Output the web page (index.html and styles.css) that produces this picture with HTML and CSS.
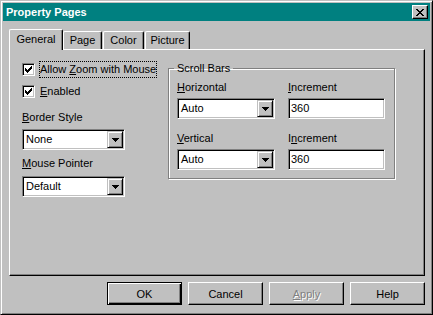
FILE: index.html
```html
<!DOCTYPE html>
<html>
<head>
    <link rel="stylesheet" href="styles.css">
</head>
<body>
    <div class="window">
        <div class="titlebar">
            <span class="title">Property Pages</span>
            <button class="close">
                <svg width="8" height="7" viewBox="0 0 8 7" shape-rendering="crispEdges"><path d="M0 0h2v1h1v1h2v-1h1v-1h2v1h-1v1h-1v1h-1v1h1v1h1v1h1v1h-2v-1h-1v-1h-2v1h-1v1h-2v-1h1v-1h1v-1h1v-1h-1v-1h-1v-1h-1z"/></svg>
            </button>
        </div>

        <div class="tabs">
            <div class="tab active tab-general">General</div>
            <div class="tab tab-page">Page</div>
            <div class="tab tab-color">Color</div>
            <div class="tab tab-picture">Picture</div>
        </div>

        <div class="panel">
            <div class="left">
                <div class="check">
                    <span class="box"><svg width="7" height="7" viewBox="0 0 7 7" shape-rendering="crispEdges"><path d="M6 0h1v3h-1zM5 1h1v3h-1zM4 2h1v3h-1zM3 3h1v3h-1zM2 4h1v3h-1zM1 3h1v3h-1zM0 2h1v3h-1z"/></svg></span>
                    <span class="check-text focus">Allow <u>Z</u>oom with Mouse</span>
                </div>
                <div class="check second">
                    <span class="box"><svg width="7" height="7" viewBox="0 0 7 7" shape-rendering="crispEdges"><path d="M6 0h1v3h-1zM5 1h1v3h-1zM4 2h1v3h-1zM3 3h1v3h-1zM2 4h1v3h-1zM1 3h1v3h-1zM0 2h1v3h-1z"/></svg></span>
                    <span class="check-text"><u>E</u>nabled</span>
                </div>

                <div class="label border-label"><u>B</u>order Style</div>
                <div class="select wide">
                    <span class="value">None</span>
                    <span class="arrow"><svg width="7" height="4" viewBox="0 0 7 4" shape-rendering="crispEdges"><path d="M0 0h7v1h-1v1h-1v1h-1v1h-1v-1h-1v-1h-1v-1h-1z"/></svg></span>
                </div>

                <div class="label pointer-label"><u>M</u>ouse Pointer</div>
                <div class="select wide">
                    <span class="value">Default</span>
                    <span class="arrow"><svg width="7" height="4" viewBox="0 0 7 4" shape-rendering="crispEdges"><path d="M0 0h7v1h-1v1h-1v1h-1v1h-1v-1h-1v-1h-1v-1h-1z"/></svg></span>
                </div>
            </div>

            <fieldset class="group">
                <legend>Scroll Bars</legend>
                <div class="group-grid">
                    <div class="label"><u>H</u>orizontal</div>
                    <div class="label"><u>I</u>ncrement</div>
                    <div class="select">
                        <span class="value">Auto</span>
                        <span class="arrow"><svg width="7" height="4" viewBox="0 0 7 4" shape-rendering="crispEdges"><path d="M0 0h7v1h-1v1h-1v1h-1v1h-1v-1h-1v-1h-1v-1h-1z"/></svg></span>
                    </div>
                    <div class="field">360</div>

                    <div class="label row-gap"><u>V</u>ertical</div>
                    <div class="label row-gap">I<u>n</u>crement</div>
                    <div class="select">
                        <span class="value">Auto</span>
                        <span class="arrow"><svg width="7" height="4" viewBox="0 0 7 4" shape-rendering="crispEdges"><path d="M0 0h7v1h-1v1h-1v1h-1v1h-1v-1h-1v-1h-1v-1h-1z"/></svg></span>
                    </div>
                    <div class="field">360</div>
                </div>
            </fieldset>
        </div>

        <div class="buttons">
            <button class="btn default">OK</button>
            <button class="btn">Cancel</button>
            <button class="btn disabled"><u>A</u>pply</button>
            <button class="btn">Help</button>
        </div>
    </div>
</body>
</html>
```

FILE: styles.css
```css
* {
    box-sizing: border-box;
}
body {
    margin: 0;
    font-family: "Liberation Sans", Arial, sans-serif;
    font-size: 11px;
    color: #000;
    background: #c0c0c0;
}
u {
    text-underline-offset: 1px;
}
.window {
    width: 433px;
    height: 315px;
    padding: 2px;
    background: #c0c0c0;
    border: 1px solid;
    border-color: #c0c0c0 #000 #000 #c0c0c0;
    box-shadow: inset 1px 1px #fff, inset -1px -1px #808080;
}
.titlebar {
    height: 18px;
    display: flex;
    align-items: center;
    justify-content: space-between;
    padding: 0 2px 0 3px;
    background: #008080;
    color: #fff;
}
.title {
    font-weight: bold;
    line-height: 18px;
}
.close {
    width: 16px;
    height: 14px;
    padding: 0;
    display: flex;
    align-items: center;
    justify-content: center;
    background: #c0c0c0;
    border: 1px solid;
    border-color: #fff #000 #000 #fff;
    box-shadow: inset -1px -1px #808080;
}

/* tabs */
.tabs {
    height: 20px;
    display: flex;
    align-items: flex-end;
    margin: 8px 0 0 6px;
    position: relative;
    z-index: 1;
}
.tab {
    height: 18px;
    margin-right: 1px;
    line-height: 16px;
    text-align: center;
    white-space: nowrap;
    border: 1px solid;
    border-bottom: none;
    border-color: #fff #000 #000 #fff;
    border-radius: 2px 2px 0 0;
    box-shadow: inset -1px 0 #808080;
}
.tab.active {
    height: 21px;
    margin-bottom: -1px;
    margin-right: 0;
    line-height: 18px;
    background: #c0c0c0;
}
.tab-general {
    width: 54px;
}
.tab-page {
    width: 39px;
}
.tab-color {
    width: 41px;
}
.tab-picture {
    width: 45px;
}

/* panel */
.panel {
    height: 227px;
    margin: 0 5px 0 6px;
    padding: 11px 0 0 12px;
    display: flex;
    align-items: flex-start;
    border: 1px solid;
    border-color: #fff #000 #000 #fff;
    box-shadow: inset -1px -1px #808080;
}
.left {
    width: 146px;
    flex-shrink: 0;
}
.check {
    height: 17px;
    display: flex;
    align-items: center;
}
.check.second {
    margin-top: 5px;
}
.box {
    width: 13px;
    height: 13px;
    margin-right: 4px;
    display: flex;
    align-items: center;
    justify-content: center;
    background: #fff;
    border: 1px solid;
    border-color: #808080 #fff #fff #808080;
    box-shadow: inset 1px 1px #000, inset -1px -1px #c0c0c0;
}
.check-text {
    height: 17px;
    padding: 0 1px;
    line-height: 17px;
    white-space: nowrap;
}
.check-text.focus {
    outline: 1px dotted #000;
    outline-offset: -1px;
}
.label {
    height: 13px;
    line-height: 13px;
    white-space: nowrap;
}
.border-label {
    margin-top: 11px;
    margin-bottom: 5px;
}
.pointer-label {
    margin-top: 7px;
    margin-bottom: 6px;
}
.select,
.field {
    height: 21px;
    padding: 1px;
    display: flex;
    background: #fff;
    border: 1px solid;
    border-color: #808080 #fff #fff #808080;
    box-shadow: inset 1px 1px #000, inset -1px -1px #c0c0c0;
}
.select.wide {
    width: 103px;
}
.value {
    flex: 1;
    padding-left: 2px;
    line-height: 17px;
}
.field {
    padding-left: 2px;
    line-height: 17px;
}
.arrow {
    width: 16px;
    height: 17px;
    display: flex;
    align-items: center;
    justify-content: center;
    background: #c0c0c0;
    border: 1px solid;
    border-color: #c0c0c0 #000 #000 #c0c0c0;
    box-shadow: inset 1px 1px #fff, inset -1px -1px #808080;
}

/* scroll bars group */
.group {
    width: 227px;
    height: 117px;
    min-width: 0;
    margin: 1px 0 0 0;
    padding: 6px 0 0 8px;
    border: 1px solid #808080;
    box-shadow: inset 1px 1px #fff, 1px 1px #fff;
}
.group legend {
    padding: 0 3px;
    margin-left: -3px;
    line-height: 13px;
}
.group-grid {
    display: grid;
    grid-template-columns: 98px 97px;
    column-gap: 13px;
    row-gap: 4px;
}
.row-gap {
    margin-top: 9px;
}

/* bottom buttons */
.buttons {
    display: flex;
    justify-content: flex-end;
    gap: 6px;
    margin: 6px 5px 0 0;
}
.btn {
    width: 75px;
    height: 23px;
    padding: 0;
    font: inherit;
    color: #000;
    background: #c0c0c0;
    border: 1px solid;
    border-color: #fff #000 #000 #fff;
    box-shadow: inset -1px -1px #808080;
}
.btn.default {
    border-color: #000;
    box-shadow: inset 1px 1px #fff, inset -1px -1px #000, inset -2px -2px #808080;
}
.btn.disabled {
    color: #808080;
    text-shadow: 1px 1px #fff;
}
```
